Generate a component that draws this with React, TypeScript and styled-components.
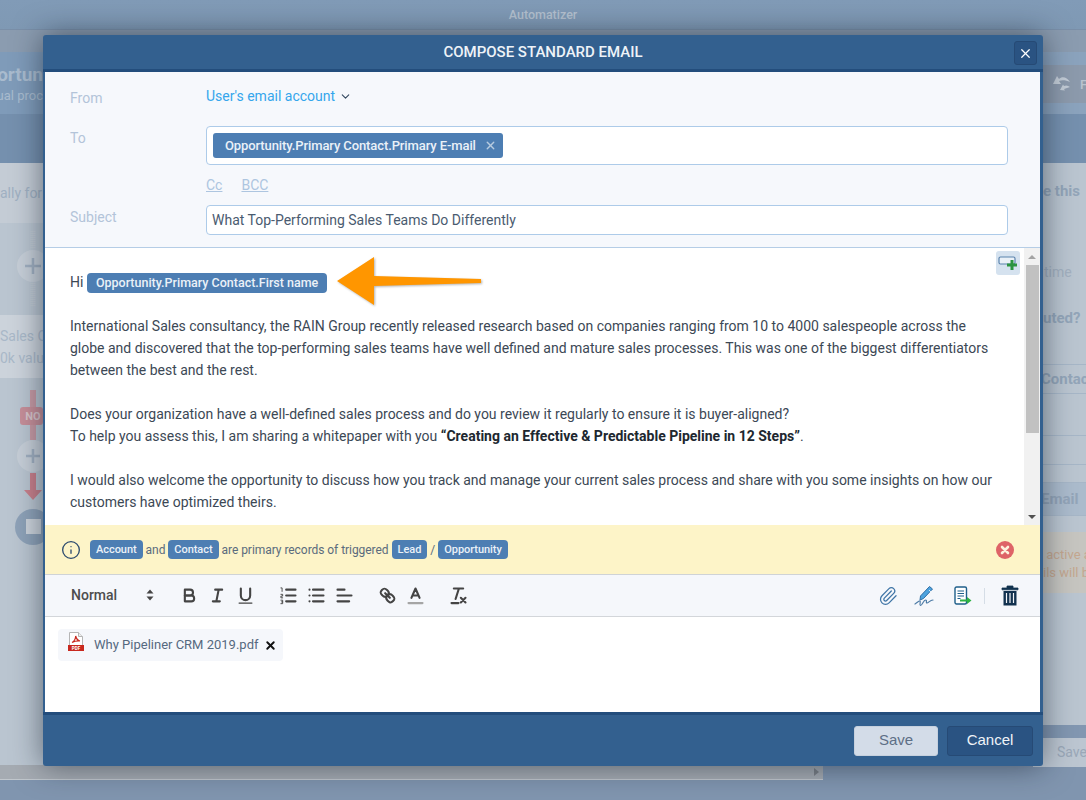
import * as React from 'react';
import styled, { createGlobalStyle } from 'styled-components';
import { X, ChevronDown, Info, Paperclip } from 'lucide-react';

const GlobalStyle = createGlobalStyle`
  html, body { margin: 0; padding: 0; background: #8095af; }
  body { font-family: Roboto, "Liberation Sans", sans-serif; }
  * { box-sizing: border-box; }
`;

const Page = styled.div`
  position: relative;
  width: 1086px;
  height: 800px;
  overflow: hidden;
  display: flex;
  flex-direction: column;
  background: #8095af;
`;

/* ---- dimmed page behind the dialog ---- */
const TopBar = styled.div`
  height: 30px;
  background: linear-gradient(#819bb7, #7f99b4);
  border-bottom: 1px solid #7a8fa8;
  color: #b4c1cf;
  font-size: 12.5px;
  font-weight: 500;
  display: flex;
  align-items: center;
  justify-content: center;
`;
const GreyStrip = styled.div`
  height: 22px;
  background: #8b9cb0;
`;
const TitleStrip = styled.div`
  height: 62px;
  background: #7f9bb9;
  display: flex;
  justify-content: space-between;
`;
const TitleClip = styled.div`
  width: 43px;
  overflow: hidden;
  display: flex;
  flex-direction: column;
  align-items: flex-end;
  padding-top: 11px;
  white-space: nowrap;
  color: #a9bbce;
`;
const TitleBig = styled.div`
  font-size: 19px;
  font-weight: 700;
  line-height: 24px;
`;
const TitleSmall = styled.div`
  font-size: 13px;
  line-height: 18px;
`;
const ActionCell = styled.div`
  width: 43px;
  height: 62px;
  padding: 13px 0 11px 9px;
  overflow: hidden;
  background: linear-gradient(#8ba3bd 0 13px, #8c9aac 13px 51px, #8ba3bd 51px);
  display: flex;
  align-items: center;
  gap: 8px;
  color: #b9c4cf;
  font-size: 13px;
  font-weight: 500;
  svg { flex: none; }
`;
const BlueBand = styled.div`
  height: 49px;
  background: #7590ae;
`;
const Canvas = styled.div`
  height: 562px;
  background: #bac5d0;
  display: flex;
  justify-content: space-between;
`;
const LeftCol = styled.div`
  width: 43px;
  overflow: hidden;
  display: flex;
  flex-direction: column;
  color: #9fb0c2;
  font-size: 14px;
`;
const ClipRow = styled.div`
  height: 60px;
  width: 43px;
  display: flex;
  align-items: center;
  white-space: nowrap;
  background: #c4ccd5;
  font-size: 14px;
`;
const ValueCard = styled.div`
  width: 43px;
  height: 63px;
  background: #ccd3db;
  display: flex;
  flex-direction: column;
  justify-content: center;
  white-space: nowrap;
  line-height: 22px;
  font-size: 14px;
  color: #a9b8c8;
`;
const FlowSvg = styled.svg`
  display: block;
  flex: none;
`;
const RightCol = styled.div`
  width: 43px;
  overflow: hidden;
  display: flex;
  flex-direction: column;
  white-space: nowrap;
  color: #93a5b9;
  font-size: 15px;
  font-weight: 700;
`;
const RightText = styled.div<{ $top: number; $thin?: boolean }>`
  margin-top: ${p => p.$top}px;
  line-height: 20px;
  padding-left: ${p => (p.$thin ? 1 : 0)}px;
  font-size: ${p => (p.$thin ? 14 : 15)}px;
  font-weight: ${p => (p.$thin ? 400 : 700)};
  color: ${p => (p.$thin ? '#a2b0bf' : '#93a5b9')};
`;
const RightRule = styled.div<{ $top: number; $h: number }>`
  margin-top: ${p => p.$top}px;
  height: ${p => p.$h}px;
  border-top: 1px solid #a6b6c7;
  border-bottom: 1px solid #a6b6c7;
  display: flex;
  align-items: center;
  text-indent: -2px;
`;
const EmailBand = styled(RightRule)`
  background: #abbbcc;
`;
const WarnBox = styled.div`
  margin-top: 16px;
  height: 61px;
  background: #c6c5c0;
  color: #c4a78f;
  font-size: 13px;
  font-weight: 400;
  line-height: 18px;
  padding-top: 14px;
`;
const BottomRow = styled.div`
  height: 55px;
  flex: none;
  display: flex;
`;
const BottomLeft = styled.div`
  width: 823px;
  display: flex;
  flex-direction: column;
`;
const CanvasTail = styled.div`
  height: 40px;
  background: #bac5d0;
`;
const GhostScroll = styled.div`
  height: 15px;
  background: #a5abb2;
  border-bottom: 1px solid #c1c7cd;
  display: flex;
  justify-content: flex-end;
  align-items: center;
  padding-right: 4px;
`;
const GhostArrow = styled.div`
  width: 0;
  height: 0;
  border-left: 5px solid #7b8087;
  border-top: 4px solid transparent;
  border-bottom: 4px solid transparent;
`;
const BottomRight = styled.div`
  flex: 1;
  display: flex;
  flex-direction: column;
`;
const RightStrip = styled.div`
  height: 13px;
  background: #8297b1;
`;
const GhostSave = styled.div`
  width: 53px;
  height: 29px;
  align-self: flex-end;
  background: #bcc6d1;
  color: #9aa8b8;
  font-size: 14px;
  padding: 6px 0 0 24px;
  white-space: nowrap;
  overflow: hidden;
`;

/* ---- dialog ---- */
const Dialog = styled.div`
  position: absolute;
  left: 43px;
  top: 35px;
  width: 1000px;
  height: 731px;
  background: #33608f;
  border-radius: 3px;
  box-shadow: 0 0 30px rgba(15, 25, 40, 0.55);
  display: flex;
  flex-direction: column;
`;
const DialogHead = styled.div`
  position: relative;
  height: 37px;
  flex: none;
  display: flex;
  align-items: center;
  justify-content: center;
  color: #eef3f8;
  font-size: 15px;
  font-weight: 500;
  border-bottom: 3px solid #234d7c;
`;
const CloseBtn = styled.div`
  position: absolute;
  right: 6px;
  top: 6px;
  width: 23px;
  height: 24px;
  background: #2a5382;
  border: 1px solid #264a75;
  border-radius: 3px;
  color: #fff;
  display: flex;
  align-items: center;
  justify-content: center;
`;
const DialogBody = styled.div`
  flex: none;
  height: 640px;
  margin: 0 3px 0 2px;
  background: #fff;
  display: flex;
  flex-direction: column;
`;
const Form = styled.div`
  height: 176px;
  flex: none;
  background: #f6f8fc;
  border-bottom: 1px solid #b5cde6;
  padding: 0 32px 0 25px;
  display: grid;
  grid-template-columns: 136px 1fr;
  grid-template-rows: 51px 41px 41px 1fr;
  align-content: start;
`;
const FieldLabel = styled.div<{ $pt: number }>`
  color: #b3c4d9;
  font-size: 14px;
  line-height: 18px;
  padding-top: ${p => p.$pt}px;
`;
const FromValue = styled.div`
  display: flex;
  align-items: flex-start;
  padding-top: 15px;
  color: #35a6ec;
  font-size: 14px;
  line-height: 18px;
  gap: 4px;
  svg { margin-top: 3px; color: #33485f; }
`;
const ToBox = styled.div`
  height: 39px;
  margin-top: 3px;
  background: #fff;
  border: 1px solid #adcbe9;
  border-radius: 4px;
  padding: 6px;
  display: flex;
  align-items: flex-start;
`;
const ToChip = styled.div`
  height: 25px;
  background: #4d7eb3;
  color: #eaf1f8;
  border-radius: 3px;
  display: flex;
  align-items: center;
  font-size: 13px;
  font-weight: 500;
  letter-spacing: -0.1px;
  padding: 0 6px 0 12px;
  gap: 8px;
  svg { color: #b7cbe0; }
`;
const CopyLinks = styled.div`
  display: flex;
  gap: 19px;
  padding-top: 12px;
  color: #adc5e0;
  font-size: 14px;
  line-height: 18px;
  text-decoration: underline;
`;
const SubjectBox = styled.div`
  height: 30px;
  background: #fff;
  border: 1px solid #adcbe9;
  border-radius: 4px;
  padding: 0 5px 1px;
  display: flex;
  align-items: center;
  color: #4a5b70;
  font-size: 14px;
`;
const Editor = styled.div`
  position: relative;
  height: 277px;
  flex: none;
  display: flex;
`;
const EditorText = styled.div`
  flex: 1;
  overflow: hidden;
  padding: 23px 30px 0 25px;
  color: #3c4855;
  font-size: 14px;
  line-height: 22px;
  b { color: #20272f; }
`;
const Para = styled.p`
  margin: 0 0 22px;
`;
const MergeTag = styled.span<{ $big?: boolean }>`
  display: inline-block;
  background: #4d7eb3;
  color: #eaf1f8;
  border-radius: 4px;
  font-weight: 500;
  font-size: ${p => (p.$big ? 12.5 : 11)}px;
  line-height: ${p => (p.$big ? 20 : 19)}px;
  padding: 0 ${p => (p.$big ? 9 : 6)}px;
`;
const AddFieldBtn = styled.div`
  position: absolute;
  right: 20px;
  top: 3px;
  width: 24px;
  height: 24px;
  border-radius: 3px;
  background: #d5e2ef;
  display: flex;
  align-items: center;
  justify-content: center;
`;
const ScrollTrack = styled.div`
  width: 16px;
  flex: none;
  background: #f1f1f1;
  display: flex;
  flex-direction: column;
  align-items: center;
`;
const ScrollCap = styled.div<{ $up?: boolean }>`
  height: 17px;
  flex: none;
  display: flex;
  align-items: center;
  justify-content: center;
  &::before {
    content: '';
    border-left: 4px solid transparent;
    border-right: 4px solid transparent;
    ${p => (p.$up ? 'border-bottom: 4px solid #a3a3a3;' : 'border-top: 4px solid #505050;')}
  }
`;
const ScrollThumb = styled.div`
  width: 13px;
  height: 168px;
  background: #c1c1c1;
`;
const ScrollRest = styled.div`
  flex: 1;
`;
const ArrowOverlay = styled.svg`
  position: absolute;
  left: 286px;
  top: 4px;
  filter: drop-shadow(1px 1px 1px rgba(0, 0, 0, 0.3));
`;
const Notice = styled.div`
  height: 50px;
  flex: none;
  background: #fdf4c8;
  border-bottom: 1px solid #cfd3d6;
  display: flex;
  align-items: center;
  padding: 0 26px 0 16px;
  color: #5a6b7d;
  font-size: 12px;
`;
const NoticeLine = styled.div`
  flex: 1;
  display: flex;
  align-items: center;
  gap: 3px;
  margin-left: 9px;
  letter-spacing: -0.05px;
`;
const NoticeInfo = styled.span`
  display: flex;
  color: #2c4a6e;
`;
const Toolbar = styled.div`
  height: 42px;
  flex: none;
  background: #f5f7fb;
  border-bottom: 1px solid #d3d6da;
  display: flex;
  align-items: center;
  padding-left: 26px;
  padding-right: 21px;
`;
const PickerLabel = styled.div`
  width: 104px;
  display: flex;
  align-items: center;
  justify-content: space-between;
  padding-right: 20px;
  padding-bottom: 1px;
  color: #4d4d4d;
  font-size: 14px;
  font-weight: 500;
`;
const Group = styled.div`
  display: flex;
  margin-right: 15px;
`;
const ToolBtn = styled.div`
  width: 28px;
  height: 24px;
  display: flex;
  align-items: center;
  justify-content: center;
`;
const Spacer = styled.div`
  flex: 1;
`;
const ActionIcons = styled.div`
  display: flex;
  align-items: center;
  gap: 16px;
`;
const DocIcon = styled.svg`
  margin: 0 -4px 0 2px;
`;
const Divider = styled.div`
  width: 1px;
  height: 16px;
  background: #d5dde6;
`;
const Attachments = styled.div`
  flex: 1;
  padding: 12px 13px;
  display: flex;
  align-items: flex-start;
`;
const FileChip = styled.div`
  height: 32px;
  background: #f5f7fb;
  border-radius: 4px;
  display: flex;
  align-items: center;
  padding: 0 6px 0 10px;
  color: #56697f;
  font-size: 13px;
  gap: 10px;
  svg { flex: none; }
`;
const PdfSvg = styled.svg`
  align-self: flex-start;
  margin-top: 3px;
`;
const FileName = styled.span`
  margin-top: -2px;
`;
const FileRemove = styled.span`
  display: flex;
  color: #111;
  margin-left: -5px;
`;
const DialogFoot = styled.div`
  flex: 1;
  border-top: 3px solid #234d7c;
  display: flex;
  justify-content: flex-end;
  align-items: center;
  gap: 9px;
  padding: 0 10px 0 0;
`;
const FootBtn = styled.div<{ $primary?: boolean }>`
  height: 30px;
  width: ${p => (p.$primary ? 86 : 84)}px;
  padding-bottom: 2px;
  border-radius: 3px;
  display: flex;
  align-items: center;
  justify-content: center;
  font-size: 15px;
  font-family: "Liberation Sans", Arial, sans-serif;
  background: ${p => (p.$primary ? '#2a5382' : '#d3dce8')};
  color: ${p => (p.$primary ? '#f0f4f8' : '#5d6f86')};
  border: 1px solid ${p => (p.$primary ? '#264a75' : '#c6d0dd')};
`;

const QlStroke = { fill: 'none', stroke: '#444', strokeWidth: 1.8, strokeLinecap: 'round', strokeLinejoin: 'round' } as const;

const QlIcon = ({ children }: { children: React.ReactNode }) => (
  <svg width={21} height={21} viewBox="0 0 18 18">
    <g {...QlStroke}>{children}</g>
  </svg>
);

const UpDown = () => (
  <svg width={10} height={14} viewBox="0 0 10 14">
    <path d="M5 1.5 8.5 5.5H1.5zM5 12.5 1.5 8.5H8.5z" fill="#444" />
  </svg>
);

const ClearCircle = () => (
  <svg width={18} height={18} viewBox="0 0 18 18">
    <circle cx={9} cy={9} r={9} fill="#de6367" />
    <path d="M6 6l6 6M12 6l-6 6" stroke="#fdf0dc" strokeWidth={2.6} strokeLinecap="round" />
  </svg>
);

const PdfIcon = () => (
  <PdfSvg width={16} height={19} viewBox="0 0 16 19">
    <path d="M1.5.5h9l4 4v9h-13z" fill="#fff" stroke="#b5b5b5" />
    <path d="M10.5.5v4h4" fill="#eee" stroke="#b5b5b5" />
    <path d="M4 10.5c2-1 3.5-3.5 3.7-6.5.6 2.8 2 4.500 4.300 5-2.500-.2-5.500.3-8 1.500z" fill="none" stroke="#c8281e" strokeWidth={1.2} />
    <rect x={0} y={13} width={16} height={6} fill="#c8281e" />
    <text x={8} y={17.7} fontSize={4.5} fontWeight={700} fill="#fff" textAnchor="middle" fontFamily="Roboto, sans-serif">PDF</text>
  </PdfSvg>
);

const App = () => {
  return (
    <Page>
      <GlobalStyle />
      <TopBar>Automatizer</TopBar>
      <GreyStrip />
      <TitleStrip>
        <TitleClip>
          <TitleBig>Opportun</TitleBig>
          <TitleSmall>ual proc</TitleSmall>
        </TitleClip>
        <ActionCell>
          <svg width={20} height={20} viewBox="0 0 20 20">
            <path d="M18 8C15 3 10 2 7 5L5 2 1 10l8 0-2-3c3-1.500 7-1 11 1z" fill="#c3ccd6" />
            <path d="M18 13c-2-1.500-4-2-6-1l-1-1.500L8 16l5 .5-1-1.500c2-1 4-1 6-2z" fill="#c3ccd6" />
          </svg>
          F
        </ActionCell>
      </TitleStrip>
      <BlueBand />
      <Canvas>
        <LeftCol>
          <ClipRow>ally for Opportunities</ClipRow>
          <FlowSvg width={43} height={92} viewBox="0 0 43 92">
            <path d="M33 8v18M33 60v24" stroke="#c0c9d2" strokeWidth={5} strokeDasharray="1 1" />
            <circle cx={33} cy={43} r={16} fill="#c6ced7" />
            <path d="M33 35v16M25 43h16" stroke="#a0afc0" strokeWidth={2.5} />
          </FlowSvg>
          <ValueCard>
            <div>Sales O</div>
            <div>0k value</div>
          </ValueCard>
          <FlowSvg width={43} height={170} viewBox="0 0 43 170">
            <path d="M30 12h6v50h-6z" fill="#c79aa4" />
            <rect x={20} y={29} width={23} height={18} rx={3} fill="#c78f99" />
            <text x={33} y={42} fontSize={11} fontWeight={700} fill="#d8c5cb" textAnchor="middle" fontFamily="Roboto, sans-serif">NO</text>
            <circle cx={33} cy={78} r={16} fill="#c6ced7" />
            <path d="M33 71v14M26 78h14" stroke="#a0afc0" strokeWidth={2.5} />
            <path d="M30 95h6v17h6l-9 10-9-10h6z" fill="#c9808b" />
            <circle cx={33} cy={149} r={18} fill="#8ea2b8" />
            <rect x={26} y={141} width={15} height={15} fill="#ccd3db" />
          </FlowSvg>
        </LeftCol>
        <RightCol>
          <RightText $top={18}>e this</RightText>
          <RightText $top={61} $thin>time</RightText>
          <RightText $top={26}>uted?</RightText>
          <RightRule $top={36} $h={30}>Contac</RightRule>
          <RightRule $top={41} $h={30} />
          <EmailBand $top={17} $h={34}>Email</EmailBand>
          <WarnBox>
            <div>&nbsp;active a</div>
            <div>ils will b</div>
          </WarnBox>
        </RightCol>
      </Canvas>
      <BottomRow>
        <BottomLeft>
          <CanvasTail />
          <GhostScroll>
            <GhostArrow />
          </GhostScroll>
        </BottomLeft>
        <BottomRight>
          <RightStrip />
          <GhostSave>Save</GhostSave>
        </BottomRight>
      </BottomRow>

      <Dialog>
        <DialogHead>
          COMPOSE STANDARD EMAIL
          <CloseBtn>
            <X size={15} />
          </CloseBtn>
        </DialogHead>
        <DialogBody>
          <Form>
            <FieldLabel $pt={17}>From</FieldLabel>
            <FromValue>
              User's email account
              <ChevronDown size={13} />
            </FromValue>
            <FieldLabel $pt={6}>To</FieldLabel>
            <ToBox>
              <ToChip>
                Opportunity.Primary Contact.Primary E-mail
                <X size={13} strokeWidth={2.5} />
              </ToChip>
            </ToBox>
            <div />
            <CopyLinks>
              <span>Cc</span>
              <span>BCC</span>
            </CopyLinks>
            <FieldLabel $pt={3}>Subject</FieldLabel>
            <SubjectBox>What Top-Performing Sales Teams Do Differently</SubjectBox>
          </Form>
          <Editor>
            <EditorText>
              <Para>
                Hi <MergeTag $big>Opportunity.Primary Contact.First name</MergeTag>
              </Para>
              <Para>
                International Sales consultancy, the RAIN Group recently released research based on companies ranging from 10 to 4000 salespeople across the globe and discovered that the top-performing sales teams have well defined and mature sales processes. This was one of the biggest differentiators between the best and the rest.
              </Para>
              <Para>
                Does your organization have a well-defined sales process and do you review it regularly to ensure it is buyer-aligned?
                <br />
                To help you assess this, I am sharing a whitepaper with you <b>“Creating an Effective &amp; Predictable Pipeline in 12 Steps”</b>.
              </Para>
              <Para>
                I would also welcome the opportunity to discuss how you track and manage your current sales process and share with you some insights on how our customers have optimized theirs.
              </Para>
            </EditorText>
            <ScrollTrack>
              <ScrollCap $up />
              <ScrollThumb />
              <ScrollRest />
              <ScrollCap />
            </ScrollTrack>
            <AddFieldBtn>
              <svg width={20} height={16} viewBox="0 0 20 16">
                <rect x={1} y={2} width={16} height={7} rx={1.5} fill="#e9f0f7" stroke="#5b83ad" strokeWidth={1.2} />
                <path d="M14 5v10M9 10h10" stroke="#2c9440" strokeWidth={3} />
              </svg>
            </AddFieldBtn>
            <ArrowOverlay width={150} height={60} viewBox="0 0 150 60">
              <path d="M6 29 43 5v19l107 3v4L43 34v19z" fill="#ff9600" />
            </ArrowOverlay>
          </Editor>
          <Notice>
            <NoticeInfo>
              <Info size={20} strokeWidth={1.6} />
            </NoticeInfo>
            <NoticeLine>
              <MergeTag>Account</MergeTag>
              and
              <MergeTag>Contact</MergeTag>
              are primary records of triggered
              <MergeTag>Lead</MergeTag>
              /
              <MergeTag>Opportunity</MergeTag>
            </NoticeLine>
            <ClearCircle />
          </Notice>
          <Toolbar>
            <PickerLabel>
              Normal
              <UpDown />
            </PickerLabel>
            <Group>
              <ToolBtn>
                <QlIcon>
                  <path d="M5 4h4.5a2.5 2.5 0 0 1 0 5H5z" />
                  <path d="M5 9h5.5a2.5 2.5 0 0 1 0 5H5z" />
                </QlIcon>
              </ToolBtn>
              <ToolBtn>
                <QlIcon>
                  <path d="M7 4h6M5 14h6M8 14l2-10" />
                </QlIcon>
              </ToolBtn>
              <ToolBtn>
                <QlIcon>
                  <path d="M5 3v6a4 4 0 0 0 8 0V3" />
                  <path d="M3.5 15.5h11" strokeWidth={1} />
                </QlIcon>
              </ToolBtn>
            </Group>
            <Group>
              <ToolBtn>
                <QlIcon>
                  <path d="M7 4h8M7 9h8M7 14h8" />
                  <path d="M2.5 2.5h1v3M2.5 8h1.5v1.5H2.5V11H4M2.5 13H4v3H2.5M3 14.5h1" strokeWidth={0.8} />
                </QlIcon>
              </ToolBtn>
              <ToolBtn>
                <QlIcon>
                  <path d="M6 4h9M6 9h9M6 14h9M3 4h0M3 9h0M3 14h0" />
                </QlIcon>
              </ToolBtn>
              <ToolBtn>
                <QlIcon>
                  <path d="M3 9h12M3 14h10M3 4h6" />
                </QlIcon>
              </ToolBtn>
            </Group>
            <Group>
              <ToolBtn>
                <QlIcon>
                  <path d="M7 7l4 4" />
                  <path d="M8.9 4.577a3.476 3.476 0 0 1 .36 4.679A3.476 3.476 0 0 1 4.577 8.9C3.185 7.5 2.035 6.4 4.217 4.217S7.5 3.185 8.9 4.577z" />
                  <path d="M13.423 9.1a3.476 3.476 0 0 0-4.679-.36 3.476 3.476 0 0 0 .36 4.679c1.392 1.392 2.5 2.542 4.679.36s1.032-3.279-.36-4.679z" />
                </QlIcon>
              </ToolBtn>
              <ToolBtn>
                <QlIcon>
                  <path d="M5.5 11 9 3l3.5 8M11.63 9H6.38" />
                  <path d="M3 15.5h12" stroke="#a5a5a5" />
                </QlIcon>
              </ToolBtn>
            </Group>
            <Group>
              <ToolBtn>
                <QlIcon>
                  <path d="M5 3h8M6.5 12 9.35 3M11 11l4 4M15 11l-4 4M3 15.5h6" />
                </QlIcon>
              </ToolBtn>
            </Group>
            <Spacer />
            <ActionIcons>
              <Paperclip size={20} color="#3f75a6" strokeWidth={1.5} />
              <svg width={22} height={22} viewBox="0 0 22 22">
                <path d="M15.5 1.5l3 2.5-9 9.5-3.5 1.500.5-4z" fill="#4da3df" stroke="#2f6da3" strokeWidth={1} />
                <path d="M15 5l2 2" stroke="#fff" strokeWidth={0.8} />
                <path d="M1 19c2-1 4-3.5 5-3s-1 4 .5 4.5 3-5.5 5-5.5 0 3 1.5 3 3-3 6-3" fill="none" stroke="#4c7ba6" strokeWidth={1.2} strokeLinecap="round" />
              </svg>
              <DocIcon width={18} height={20} viewBox="0 0 18 20">
                <rect x={1} y={1} width={11.5} height={17} rx={1.5} fill="#fff" stroke="#1f5f8a" strokeWidth={1.4} />
                <path d="M3.5 5h6.5M3.5 7.5h6.5M3.5 10h6.5M3.5 12.5h3" stroke="#1f5f8a" strokeWidth={1} />
                <path d="M6 13.5h7V11l4.5 3.500L13 18v-2.500H6z" fill="#2fb344" />
              </DocIcon>
              <Divider />
              <svg width={18} height={21} viewBox="0 0 18 21">
                <path d="M1 3h16v1.8H1zM6 3V1h6v2" fill="#12324f" stroke="#12324f" strokeWidth={0.8} />
                <path d="M2.5 6h13v14.5h-13z" fill="#12324f" />
                <path d="M5.5 8v10M9 8v10M12.5 8v10" stroke="#f5f7fb" strokeWidth={1.2} />
              </svg>
            </ActionIcons>
          </Toolbar>
          <Attachments>
            <FileChip>
              <PdfIcon />
              <FileName>Why Pipeliner CRM 2019.pdf</FileName>
              <FileRemove>
                <X size={13} strokeWidth={3.5} />
              </FileRemove>
            </FileChip>
          </Attachments>
        </DialogBody>
        <DialogFoot>
          <FootBtn>Save</FootBtn>
          <FootBtn $primary>Cancel</FootBtn>
        </DialogFoot>
      </Dialog>
    </Page>
  );
};

export default App;
